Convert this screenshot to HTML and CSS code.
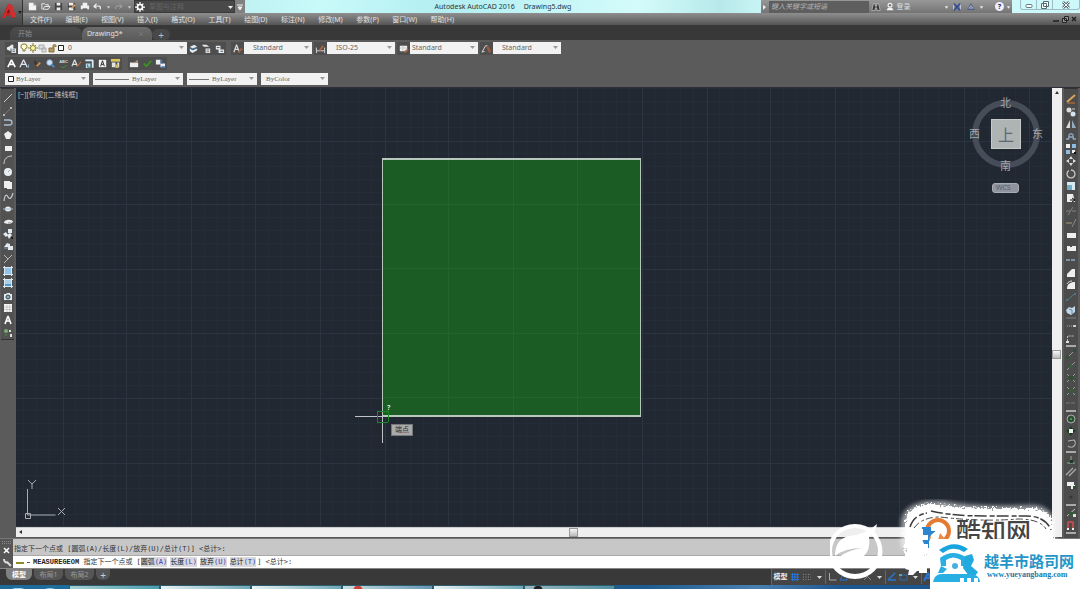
FILE: index.html
```html
<!DOCTYPE html>
<html lang="zh-CN">
<head>
<meta charset="utf-8">
<title>Autodesk AutoCAD 2016 - Drawing5.dwg</title>
<link rel="stylesheet" href="styles.css">
</head>
<body>
<header class="app-header">
  <button class="app-menu" aria-label="应用程序菜单">
    <svg width="22" height="24" viewBox="0 0 22 24"><path d="M2 17 8 3l4 1 4 12-4 1-1-3-5 1-1 2z" fill="#c51f22"/><path d="m7 12 2-5 2 4z" fill="#6b1113"/><path d="m8 3-2 8-4 6 3-1 3-8 4 8 4 0L12 4z" fill="#e0383a" opacity=".6"/><path d="M18 10h4l-2 3z" fill="#222"/></svg>
  </button>
  <div class="header-rows">
    <div class="titlebar">
      <nav class="quick-access" aria-label="快速访问工具栏">
        <button aria-label="新建"><svg viewBox="0 0 12 12"><path d="M2 2h5l3 3v5H2z" fill="#f3f3f3"/><path d="M7 2v3h3" fill="#999"/></svg></button>
        <button aria-label="打开"><svg viewBox="0 0 12 12"><path d="M2 9V3h3l1 1h3v2H5L3 9h6l2-3H6" fill="none" stroke="#eee"/></svg></button>
        <button aria-label="保存"><svg viewBox="0 0 12 12"><path d="M2 2h8v8H2z" fill="#444"/><path d="M4 2h4v3H4zM4 7h4v3H4z" fill="#eee"/></svg></button>
        <button aria-label="另存为"><svg viewBox="0 0 12 12"><path d="M2 2h8v8H2z" fill="#444"/><path d="M3 2h5v3H3zM3 7h5v3H3z" fill="#eee"/><path d="m6 8 4-4" stroke="#d19a57" stroke-width="2"/></svg></button>
        <button aria-label="打印"><svg viewBox="0 0 12 12"><path d="M4 2h5v3H4zM2 5h9v4H2z" fill="#f0f0f0"/><path d="M4 8h5v2H4z" fill="#666"/></svg></button>
        <button aria-label="放弃"><svg viewBox="0 0 12 12"><path d="M9 9c1-4-2-4-6-3m2-3L2 6l3 2" fill="none" stroke="#eee" stroke-width="1.3"/></svg></button>
        <button class="narrow" aria-label="放弃列表"><svg viewBox="0 0 6 12"><path d="M1 5h4L3 8z" fill="#ccc"/></svg></button>
        <button aria-label="重做"><svg viewBox="0 0 12 12"><path d="M3 9c-1-4 2-4 6-3M7 3l3 3-3 2" fill="none" stroke="#aaa"/></svg></button>
        <button class="narrow" aria-label="重做列表"><svg viewBox="0 0 6 12"><path d="M1 5h4L3 8z" fill="#ccc"/></svg></button>
      </nav>
      <div class="workspace">
        <svg width="12" height="12" viewBox="0 0 12 12"><circle cx="6" cy="6" r="3" fill="none" stroke="#fff" stroke-width="2"/><path d="M6 0v3M6 9v3M0 6h3M9 6h3M2 2l2 2M10 2 8 4M2 10l2-2M10 10 8 8" stroke="#fff" stroke-width="1.500"/></svg>
        <select aria-label="工作空间"><option>草图与注释</option></select>
        <svg width="6" height="12"><path d="M0 5h5L2.500 8z" fill="#eee"/></svg>
      </div>
      <button class="qat-more" aria-label="自定义"><svg width="8" height="12"><path d="M1 4h6M2 6h4L4 9z" fill="#eee" stroke="#eee"/></svg></button>
      <h1 class="title"><span>Autodesk AutoCAD 2016</span><span>Drawing5.dwg</span></h1>
      <div class="infocenter">
        <span class="info-arrow"><svg width="7" height="12"><path d="m2 4 3 2-3 3z" fill="#eee"/></svg></span>
        <input aria-label="搜索" placeholder="键入关键字或短语">
        <button aria-label="查找"><svg viewBox="0 0 12 12"><path d="M3 2h2v3h2V2h2l2 8H7V7H5v3H1z" fill="#333" stroke="#ddd" stroke-width=".7"/></svg></button>
        <button class="signin"><svg viewBox="0 0 12 12"><circle cx="6" cy="4" r="3" fill="#f4f4f4"/><path d="M2 10c0-4 8-4 8 0z" fill="#f4f4f4"/><circle cx="6" cy="4" r="1.500" fill="#777"/></svg>登录</button>
        <span class="spacer"></span>
        <button class="narrow" aria-label="登录选项"><svg viewBox="0 0 6 12"><path d="M1 5h4L3 8z" fill="#eee"/></svg></button>
        <button aria-label="Exchange"><svg viewBox="0 0 12 12"><path d="m2 2 8 8M10 2l-8 8" stroke="#304b91" stroke-width="2"/><path d="M2 3v6M10 3v6" stroke="#d7dcec"/></svg></button>
        <button aria-label="A360"><svg viewBox="0 0 12 12"><path d="m6 2 4 7H2z" fill="#c9cede" stroke="#445481"/><path d="M6 4v3L3 9m3-2 3 2" fill="none" stroke="#445481"/></svg></button>
        <button class="narrow" aria-label="A360选项"><svg viewBox="0 0 6 12"><path d="M1 5h4L3 8z" fill="#eee"/></svg></button>
        <button class="help" aria-label="帮助">?</button>
        <button class="narrow" aria-label="帮助选项"><svg viewBox="0 0 6 12"><path d="M1 5h4L3 8z" fill="#eee"/></svg></button>
      </div>
      <div class="window-controls">
        <button aria-label="最小化"><svg width="10" height="8"><rect x="2" y="3.500" width="6" height="3" rx="1" fill="#fff" stroke="#667a85"/></svg></button>
        <button aria-label="还原"><svg width="10" height="8"><path d="M3.500.5h5v5h-5zM1.500 2.500h5v5h-5z" fill="#fff" stroke="#566975"/></svg></button>
        <button class="close" aria-label="关闭"><svg width="10" height="8"><path d="m2 1 6 6M8 1 2 7" stroke="#566975" stroke-width="2.600"/><path d="m2 1 6 6M8 1 2 7" stroke="#fff"/></svg></button>
      </div>
    </div>
    <div class="menubar">
      <nav class="menus" aria-label="菜单">
        <button>文件(F)</button><button>编辑(E)</button><button>视图(V)</button><button>插入(I)</button><button>格式(O)</button><button>工具(T)</button><button>绘图(D)</button><button>标注(N)</button><button>修改(M)</button><button>参数(P)</button><button>窗口(W)</button><button>帮助(H)</button>
      </nav>
      <div class="doc-controls">
        <button aria-label="最小化文档"><svg width="8" height="8"><path d="M1 6h6" stroke="#222" stroke-width="1.500"/></svg></button>
        <button aria-label="还原文档"><svg width="8" height="8"><path d="M3.500 1.500h4v4h-4zM1.500 3.500h4v4h-4z" fill="#999" stroke="#222"/></svg></button>
        <button aria-label="关闭文档"><svg width="8" height="8"><path d="m2 2 4 4M6 2 2 6" stroke="#222" stroke-width="1.500"/></svg></button>
      </div>
    </div>
  </div>
</header>

<nav class="file-tabs" aria-label="文件">
  <button class="file-tab">开始</button>
  <button class="file-tab active">Drawing5*<svg width="6" height="6"><path d="m1 1 4 4M5 1 1 5" stroke="#777"/></svg></button>
  <button class="add-tab" aria-label="新图形">+</button>
</nav>

<section class="toolbars" aria-label="工具栏">
  <div class="bar">
    <button class="tool" aria-label="图层特性"><svg viewBox="0 0 12 12"><path d="m1 5 4-2v6L1 7zM5 2h3v4H5zM6 6h5v5H6z" fill="#e8edf0"/><path d="M7 7.500h3M7 9.500h3" stroke="#567"/></svg></button>
    <div class="combo layer">
      <svg width="50" height="12" viewBox="0 0 50 12"><path d="M6 2a2.500 2.500 0 0 1 1 5v2H5V7a2.500 2.500 0 0 1 1-5z" fill="#fffbd0" stroke="#857c3a"/><circle cx="15" cy="6" r="2.500" fill="#fff6a0" stroke="#8b8137"/><path d="M15 1v2M15 9v2M10 6h2M18 6h2M12 3l1 1M18 3l-1 1M12 9l1-1M18 9l-1-1" stroke="#8b8137"/><path d="M21 3h5v4h-5zM24 6h4v4h-4z" fill="#ddd" stroke="#aaa"/><path d="M31 6h5v4h-5zM35 6V4c0-2 3-2 3 0v1" fill="#b29862" stroke="#8c7038"/><path d="M40.500 3.500h5v5h-5z" fill="#fff" stroke="#222"/></svg>
      <select class="digit" aria-label="图层"><option>0</option></select>
      <svg class="arrow" width="5" height="4"><path d="M0 0h5L2.500 3z"/></svg>
    </div>
    <div class="tool-set">
      <button class="tool" aria-label="置为当前"><svg viewBox="0 0 12 12"><path d="m2 4 5-2 3 2-5 2zM2 6l3 2 5-2v2l-5 3-3-2z" fill="#e3eaf0"/><path d="m1 5 4 2 5-2" stroke="#3b76a8" fill="none"/></svg></button>
      <button class="tool" aria-label="上一个图层"><svg viewBox="0 0 12 12"><path d="m1 2 5 0 3 2H3zM5 6h5v5H5z" fill="#e8e8e8"/><path d="M6 7.500h3M6 9.500h3" stroke="#777"/></svg></button>
      <button class="tool" aria-label="图层状态"><svg viewBox="0 0 12 12"><path d="M2 3h5v4H2zM5 7h6v4H5z" fill="#eee"/><path d="M3 5h3M7 9h3" stroke="#357"/></svg></button>
    </div>
    <button class="tool" aria-label="文字样式"><svg viewBox="0 0 12 12"><path d="m2 10 3-8 3 8M3 7h4" fill="none" stroke="#ddd" stroke-width="1.300"/><path d="m7 10 4-4" stroke="#a45c3d" stroke-width="2"/></svg></button>
    <div class="combo style inset"><select aria-label="文字样式"><option>Standard</option></select><svg class="arrow" width="5" height="4"><path d="M0 0h5L2.500 3z"/></svg></div>
    <button class="tool" aria-label="标注样式"><svg viewBox="0 0 12 12"><path d="M1.500 5v6M10.500 5v6M2 8.500h8" stroke="#ddd"/><path d="m5 8 4-5" stroke="#a96544" stroke-width="2"/></svg></button>
    <div class="combo style inset"><select aria-label="标注样式"><option>ISO-25</option></select><svg class="arrow" width="5" height="4"><path d="M0 0h5L2.500 3z"/></svg></div>
    <button class="tool" aria-label="表格样式"><svg viewBox="0 0 12 12"><path d="M2 3h8v6H2z" fill="#eee"/><path d="M2 5.500h8M5.500 3v6" stroke="#ccc"/><path d="m7 10 4-3" stroke="#a96544" stroke-width="2"/></svg></button>
    <div class="combo style"><select aria-label="表格样式"><option>Standard</option></select><svg class="arrow" width="5" height="4"><path d="M0 0h5L2.500 3z"/></svg></div>
    <button class="tool" aria-label="多重引线样式"><svg viewBox="0 0 12 12"><path d="m1 10 4-7h2M1 10l3-1" stroke="#ddd" fill="none"/><path d="m7 4 3 6" stroke="#9a5a3d" stroke-width="3"/></svg></button>
    <div class="combo style inset"><select aria-label="多重引线样式"><option>Standard</option></select><svg class="arrow" width="5" height="4"><path d="M0 0h5L2.500 3z"/></svg></div>
  </div>
  <div class="bar text-tools">
    <button class="tool" aria-label="多行文字"><svg viewBox="0 0 12 12"><path d="m2 10 4-8 4 8M4 7h4" fill="none" stroke="#fff" stroke-width="1.800"/></svg></button>
    <button class="tool" aria-label="单行文字"><svg viewBox="0 0 12 12"><path d="m1 10 4-8 4 8M3 7h4" fill="none" stroke="#dfe6ee" stroke-width="1.400"/><path d="M10.500 7v4" stroke="#7db0dd"/></svg></button>
    <button class="tool" aria-label="编辑文字"><svg viewBox="0 0 12 12"><path d="m3 3 3 7" stroke="#333" stroke-width="2"/><path d="m5 9 4-4" stroke="#c78c4f" stroke-width="2"/></svg></button>
    <button class="tool" aria-label="查找文字"><svg viewBox="0 0 12 12"><circle cx="5" cy="5" r="3" fill="#cfe2f5" stroke="#8fb4d8"/><path d="m7 7 3 3" stroke="#4f8fcf" stroke-width="2"/></svg></button>
    <button class="tool abc" aria-label="拼写检查">ABC<svg viewBox="0 0 10 5"><path d="m2 2 2 2 4-3" fill="none" stroke="#3f8d3a"/></svg></button>
    <button class="tool" aria-label="文字样式管理"><svg viewBox="0 0 12 12"><path d="m1 9 3-7 3 7M2 7h4" fill="none" stroke="#ddd" stroke-width="1.300"/><path d="m7 9 4-5" stroke="#b06340" stroke-width="1.500"/></svg></button>
    <button class="tool" aria-label="缩放文字"><svg viewBox="0 0 12 12"><path d="M1.500 2.500h8v8" fill="none" stroke="#d6ebf5" stroke-width="2"/><path d="M2 6h5v5H2z" fill="#b8dff0"/><path d="M4 7v3h3" stroke="#367" fill="none"/></svg></button>
    <button class="tool" aria-label="对正文字"><svg viewBox="0 0 12 12"><path d="M2 2h8v8H2z" fill="#f1f1f1"/><path d="m4 9 2-6 2 6M5 7h2" fill="none" stroke="#222"/></svg></button>
    <button class="tool" aria-label="空间转换"><svg viewBox="0 0 12 12"><path d="M1 1h10v3H1z" fill="#d8c45a"/><path d="M2 5h4v5H2zM8 5h2v5H8z" fill="#e3e3e3"/><path d="M6 7h3v4H6z" fill="#cdb850"/></svg></button>
    <button class="tool split" aria-label="附着"><svg viewBox="0 0 12 12"><path d="M1 5h9v5H1z" fill="#eee"/><path d="m5 6 4-4 1 2" fill="#b99278"/></svg></button>
    <button class="tool" aria-label="确认"><svg viewBox="0 0 12 12"><path d="m2 6 3 3 5-6" fill="none" stroke="#38931e" stroke-width="2"/></svg></button>
    <button class="tool" aria-label="选择"><svg viewBox="0 0 12 12"><path d="M1 2h5v5H1zM6 6h5v4H6z" fill="#e8edf4"/><path d="M7 2v4M7 10h4" stroke="#4578b0" stroke-width="2"/></svg></button>
  </div>
  <div class="bar props">
    <div class="combo color"><svg width="10" height="10"><path d="M2.500 2.500h5v5h-5z" fill="#fff" stroke="#222"/></svg><select aria-label="颜色"><option>ByLayer</option></select><svg class="arrow" width="5" height="4"><path d="M0 0h5L2.500 3z"/></svg></div>
    <div class="combo linetype"><svg width="36" height="4"><path d="M2 2.500h34" stroke="#777"/></svg><select aria-label="线型"><option>ByLayer</option></select><svg class="arrow" width="5" height="4"><path d="M0 0h5L2.500 3z"/></svg></div>
    <div class="combo weight"><svg width="22" height="4"><path d="M2 2.500h20" stroke="#777"/></svg><select aria-label="线宽"><option>ByLayer</option></select><svg class="arrow" width="5" height="4"><path d="M0 0h5L2.500 3z"/></svg></div>
    <div class="combo plot"><select aria-label="打印样式"><option>ByColor</option></select><svg class="arrow" width="5" height="4"><path d="M0 0h5L2.500 3z"/></svg></div>
  </div>
</section>

<main class="workarea">
  <aside class="draw-tools" aria-label="绘图">
    <button aria-label="直线"><svg viewBox="0 0 12 12"><path d="m2 10 8-8" stroke="#ccc"/></svg></button>
    <button aria-label="构造线"><svg viewBox="0 0 12 12"><path d="m3 9 6-6" stroke="#777"/><path d="M1 9h2v2H1zM8 2h2v2H8z" fill="#aeb9c6"/></svg></button>
    <button aria-label="多段线"><svg viewBox="0 0 12 12"><path d="M2 3h5c4 0 4 5 0 5H2" fill="none" stroke="#a9bfd2" stroke-width="1.300"/></svg></button>
    <button aria-label="多边形"><svg viewBox="0 0 12 12"><path d="m6 2 4 3-2 5H4L2 5z" fill="#f0f0f0"/></svg></button>
    <button aria-label="矩形"><svg viewBox="0 0 12 12"><path d="M3 4h7v5H3z" fill="#eee"/></svg></button>
    <button aria-label="圆弧"><svg viewBox="0 0 12 12"><path d="M2 10c0-5 3-8 8-8" fill="none" stroke="#c5d0da"/></svg></button>
    <button aria-label="圆"><svg viewBox="0 0 12 12"><circle cx="6" cy="6" r="4" fill="#e8eef2"/><path d="m6 6 2-2" stroke="#9ab"/></svg></button>
    <button aria-label="修订云线"><svg viewBox="0 0 12 12"><path d="M2 2h6v1h2v7H5V9H2z" fill="#eee"/></svg></button>
    <button aria-label="样条曲线"><svg viewBox="0 0 12 12"><path d="M2 10C3 2 5 4 6 6s3 3 5-4" fill="none" stroke="#c5cad0" stroke-width="1.200"/></svg></button>
    <button aria-label="椭圆"><svg viewBox="0 0 12 12"><ellipse cx="6" cy="6" rx="3" ry="2.500" fill="#eee"/><path d="M1 6h10" stroke="#a3bdd4"/></svg></button>
    <button aria-label="椭圆弧"><svg viewBox="0 0 12 12"><path d="M2 7c0-4 9-4 9-1L8 8H6z" fill="#eee"/><path d="M6 7h3" stroke="#789"/></svg></button>
    <button aria-label="插入块"><svg viewBox="0 0 12 12"><path d="m1 6 3-2 2 3-2 2zM6 1h4v4H6zM5 7l3-2 2 2-3 4z" fill="#e2eaf1"/><path d="M9 9h2v2H9z" fill="#222"/></svg></button>
    <button aria-label="创建块"><svg viewBox="0 0 12 12"><path d="m2 7 3-4 3 1v3zM6 6h5v4H6z" fill="#e2e8ee"/><path d="M2 8h4" stroke="#89a"/></svg></button>
    <button aria-label="点"><svg viewBox="0 0 12 12"><path d="m2 2 4 4 4-4M6 6l-4 4" fill="none" stroke="#bbb"/></svg></button>
    <button aria-label="图案填充"><svg viewBox="0 0 12 12"><path d="M2.500 1v10M9.500 1v10M1 2.500h10M1 9.500h10" stroke="#dce7ef"/><path d="M3 3h6v6H3z" fill="#8fc4e8"/></svg></button>
    <button aria-label="渐变色"><svg viewBox="0 0 12 12"><path d="M2.500 1v10M9.500 1v10M1 2.500h10M1 9.500h10" stroke="#dce7ef"/><path d="M3 3h6v6H3z" fill="#aacfe6"/><path d="M3 7h6v2H3z" fill="#5398ce"/></svg></button>
    <button aria-label="面域"><svg viewBox="0 0 12 12"><path d="M2 4h2l1-1h3v1h2v6H2z" fill="#e5edf1"/><circle cx="6" cy="7" r="2" fill="#89afc3" stroke="#344"/></svg></button>
    <button aria-label="表格"><svg viewBox="0 0 12 12"><path d="M2 2h8v8H2z" fill="#f4f4f4"/><path d="M2 5h8M2 7.500h8M5 3v7M7.500 3v7" stroke="#aaa" stroke-width=".5"/></svg></button>
    <button aria-label="文字"><svg viewBox="0 0 12 12"><path d="m3 10 3-8 3 8M4 7h4" fill="none" stroke="#fff" stroke-width="1.600"/></svg></button>
    <button aria-label="添加选定对象"><svg viewBox="0 0 12 12"><circle cx="4" cy="4" r="2" fill="#7caa70"/><path d="M7 3h2v2H7zM8 7h2v3H8z" fill="#ddd"/><path d="M3 7h2v2H3z" fill="#47793c"/></svg></button>
  </aside>

  <div class="drawing">
    <div class="canvas">
      <svg class="model" width="100%" height="100%" shape-rendering="crispEdges">
        <defs>
          <pattern id="minor" x="46" y="52" width="322" height="322" patternUnits="userSpaceOnUse">
            <path d="M13 0v322M26 0v322M39 0v322M52 0v322M77 0v322M90 0v322M103 0v322M116 0v322M142 0v322M155 0v322M167 0v322M180 0v322M206 0v322M219 0v322M232 0v322M245 0v322M270 0v322M283 0v322M296 0v322M309 0v322M0 13h322M0 26h322M0 39h322M0 52h322M0 77h322M0 90h322M0 103h322M0 116h322M0 142h322M0 155h322M0 167h322M0 180h322M0 206h322M0 219h322M0 232h322M0 245h322M0 270h322M0 283h322M0 296h322M0 309h322" stroke="#242c37"/>
            <path d="M1 0v322M64 0v322M129 0v322M193 0v322M258 0v322M0 1h322M0 64h322M0 129h322M0 193h322M0 258h322" stroke="#2b3541"/>
          </pattern>
        </defs>
        <rect width="100%" height="100%" fill="#212832"/>
        <rect width="100%" height="100%" fill="url(#minor)"/>
        <rect x="367" y="71" width="258" height="257" fill="#1a5c24"/>
        <path d="M432 71v257M497 71v257M561 71v257M367 116h258M367 180h258M367 245h258M367 309h258" stroke="#22642e"/>
        <path d="M366.500 70.500h258v257h-258z" fill="none" stroke="#b5c6b8" stroke-width="1"/>
        <path d="M366 71h259M366 328h259" stroke="#b9c8bc" stroke-width="2"/>
        <path d="M339 328.500h27M366.500 328v27" stroke="#bfc3c7"/>
        <path d="M361 323h11v11h-11z" fill="none" stroke="#188a25" stroke-width="1"/>
      </svg>
      <span class="view-label">[−][俯视][二维线框]</span>
      <span class="query-mark">?</span>
      <span class="snap-tip">端点</span>
      <div class="viewcube">
        <svg width="76" height="76"><circle cx="38" cy="38" r="31" fill="none" stroke="#474d58" stroke-width="6"/></svg>
        <span class="north">北</span><span class="south">南</span><span class="west">西</span><span class="east">东</span>
        <button class="cube-top">上</button>
      </div>
      <button class="wcs">WCS</button>
      <svg class="ucs" width="46" height="46"><path d="M4.500 15v26h28M2.500 39.500h5v5h-5zM5 6l4 4 4-4M9 10v5M35 34l7 7M42 34l-7 7" fill="none" stroke="#a9adb3"/></svg>
    </div>
    <div class="vscroll"><svg width="10" height="10"><path d="m3 6 2-3 2 3z" fill="#333"/></svg><span class="thumb"></span></div>
    <div class="hscroll"><svg width="10" height="9"><path d="m6 2-3 2 3 2z" fill="#333"/></svg><span class="thumb"></span></div>
  </div>

  <aside class="modify-tools" aria-label="修改">
    <div class="group g18">
      <button aria-label="删除"><svg viewBox="0 0 12 12"><path d="m2 9 8-7" stroke="#d9a45c" stroke-width="2"/><path d="M2 10h8" stroke="#c97732"/></svg></button>
      <button aria-label="复制"><svg viewBox="0 0 12 12"><circle cx="4" cy="4" r="2.500" fill="#ddd"/><circle cx="8" cy="8" r="2.500" fill="#d6e4ef"/><path d="M7 3h3" stroke="#ccc"/></svg></button>
      <button aria-label="镜像"><svg viewBox="0 0 12 12"><path d="M5 2v8H1z" fill="#d7dce1"/><path d="M7 2v8h4z" fill="#94abc0"/></svg></button>
      <button aria-label="偏移"><svg viewBox="0 0 12 12"><path d="M1 9h3c-2-7 6-7 4 0h3M4 7h4" fill="none" stroke="#8fa5bc" stroke-width="1.300"/></svg></button>
      <button aria-label="阵列"><svg viewBox="0 0 12 12"><path d="M1 1h4v4H1z" fill="#eee"/><path d="M7 1h4v4H7zM1 7h4v4H1z" fill="#8cbbe6"/><path d="M7 7h3v3H7z" fill="#eee"/><path d="M9 9h2v2H9z" fill="#111"/></svg></button>
      <button aria-label="移动"><svg viewBox="0 0 12 12"><path d="m6 1 2 3H4zM6 11l2-3H4zM1 6l3-2v4zM11 6 8 4v4z" fill="#dbe1e7"/></svg></button>
      <button aria-label="旋转"><svg viewBox="0 0 12 12"><path d="M4 2.500a4 4 0 1 0 4 0L6 2" fill="none" stroke="#c8c8c8" stroke-width="1.300"/></svg></button>
      <button aria-label="缩放"><svg viewBox="0 0 12 12"><path d="M2 2h8v8H2z" fill="#d6e9f1"/><path d="M2 5h5v5H2z" fill="#76adc5"/></svg></button>
      <button aria-label="拉伸"><svg viewBox="0 0 12 12"><path d="M2 2h6l2 8H2z" fill="#eee"/><path d="M5 8h5M7 6l3 2-3 2" stroke="#111" fill="none"/></svg></button>
      <button aria-label="修剪"><svg viewBox="0 0 12 12"><path d="M1 6h4M7 6h4M3 10l5-8" stroke="#7d8589"/></svg></button>
      <button aria-label="延伸"><svg viewBox="0 0 12 12"><path d="M1 6h6" stroke="#a49a72"/><path d="m7 10 4-8" stroke="#889"/></svg></button>
      <button aria-label="打断于点"><svg viewBox="0 0 12 12"><path d="M2 4h9v5H2z" fill="#eee"/></svg></button>
      <button aria-label="打断"><svg viewBox="0 0 12 12"><path d="M2 4h3v1h2V4h4v5H2z" fill="#eee"/></svg></button>
      <button aria-label="合并"><svg viewBox="0 0 12 12"><path d="M1 6h10" stroke="#8290a3" stroke-width="2" stroke-dasharray="4 1"/></svg></button>
      <button aria-label="倒角"><svg viewBox="0 0 12 12"><path d="M2 10V7l5-5h3v8z" fill="#eee"/></svg></button>
      <button aria-label="圆角"><svg viewBox="0 0 12 12"><path d="M2 10c0-5 3-7 8-7v7z" fill="#eee"/><path d="M2 5c1-2 3-3 5-3" fill="none" stroke="#ddd"/></svg></button>
      <button aria-label="光顺曲线"><svg viewBox="0 0 12 12"><path d="M2 9c4-1 4-5 8-6" fill="none" stroke="#557e88"/><path d="M1 8h2v2H1zM9 2h2v2H9z" fill="#4b7784"/></svg></button>
      <button aria-label="分解"><svg viewBox="0 0 12 12"><path d="m1 6 3-3 3 1 3-2v6l-4 3-4-2z" fill="#bfd6e8"/><path d="m4 5 3 1v4" stroke="#6389a8" fill="none"/></svg></button>
    </div>
    <hr>
    <div class="group g2">
      <button aria-label="临时追踪点"><svg viewBox="0 0 12 12"><path d="M2 6h7" stroke="#aaa" stroke-dasharray="1 1"/><path d="M8 5h3v2H8z" fill="#ccc"/></svg></button>
      <button aria-label="捕捉自"><svg viewBox="0 0 12 12"><path d="M2.500 9V4h7" fill="none" stroke="#bbb" stroke-dasharray="2 1"/><path d="M1 9h3v2H1z" fill="#ddd"/></svg></button>
    </div>
    <hr>
    <div class="group g5">
      <button aria-label="捕捉到端点"><svg viewBox="0 0 12 12"><path d="m2 10 8-8" stroke="#999"/><path d="M1 8h3v3H1zM8 1h3v3H8z" fill="#2f5036"/></svg></button>
      <button aria-label="捕捉到中点"><svg viewBox="0 0 12 12"><path d="m2 10 8-8" stroke="#999"/><path d="m6 4 2 4H4z" fill="#2f6237"/></svg></button>
      <button aria-label="捕捉到交点"><svg viewBox="0 0 12 12"><path d="m2 2 8 8M10 2l-8 8" stroke="#94a499"/><path d="m4 4 4 4M8 4 4 8" stroke="#27512d" stroke-width="1.500"/></svg></button>
      <button aria-label="外观交点"><svg viewBox="0 0 12 12"><path d="m2 2 8 8M10 2l-8 8" stroke="#949c97"/><path d="M4 4h4v4H4z" fill="#345e38"/></svg></button>
      <button aria-label="捕捉到延长线"><svg viewBox="0 0 12 12"><path d="M1 6h10" stroke="#777" stroke-dasharray="4 1"/></svg></button>
    </div>
    <hr>
    <div class="group g3">
      <button aria-label="捕捉到圆心"><svg viewBox="0 0 12 12"><circle cx="6" cy="6" r="4" fill="none" stroke="#9baf9e"/><circle cx="6" cy="6" r="2" fill="#3c9949" stroke="#173d1e"/></svg></button>
      <button aria-label="捕捉到象限点"><svg viewBox="0 0 12 12"><path d="m6 1 2 3 3 2-3 2-2 3-2-3-3-2 3-2z" fill="#183e1e"/><path d="M4 4h4v4H4z" fill="#f1f1f1"/></svg></button>
      <button aria-label="捕捉到切点"><svg viewBox="0 0 12 12"><path d="M3 3 9 2a4 4 0 1 1-6 6" fill="none" stroke="#aaa" stroke-width="1.200"/></svg></button>
    </div>
    <hr>
    <div class="group g4">
      <button aria-label="捕捉到垂足"><svg viewBox="0 0 12 12"><path d="M6 2v7M2 9h8" stroke="#9aa59c"/><path d="M5 6h3v3H5z" fill="#183d20"/></svg></button>
      <button aria-label="捕捉到平行线"><svg viewBox="0 0 12 12"><path d="m1 9 7-7M4 10l7-7" stroke="#a7aca8" stroke-width="1.300"/></svg></button>
      <button aria-label="捕捉到插入点"><svg viewBox="0 0 12 12"><path d="M2 3h7v4H2zM6 6h4v4H6z" fill="#eee"/><path d="M8 7h3v3H8z" fill="#27512d"/></svg></button>
      <button aria-label="捕捉到节点"><svg viewBox="0 0 12 12"><circle cx="6" cy="6" r="1.500" fill="#2c3c30"/></svg></button>
    </div>
    <hr>
    <div class="group g2">
      <button aria-label="捕捉到最近点"><svg viewBox="0 0 12 12"><path d="m2 9 8-7" stroke="#c0c6c1"/><path d="M4 5h4v3H4z" fill="#295f37"/><path d="M8 7h3v3H8z" fill="#ddd"/></svg></button>
      <button aria-label="对象捕捉设置"><svg viewBox="0 0 12 12"><path d="M3 10V3h5v7" fill="none" stroke="#b84d4d" stroke-width="2"/><path d="M2 9h2v2H2zM7 9h2v2H7z" fill="#eee"/></svg></button>
    </div>
    <hr>
  </aside>
</main>

<section class="command" aria-label="命令行">
  <div class="command-grip">
    <svg width="13" height="30"><path d="M2 2.500h9M2 4.500h9" stroke="#888" stroke-dasharray="1 1"/><path d="m4 9 5 5M9 9l-5 5" stroke="#fff" stroke-width="1.500"/><path d="M4 20c0 3 2 4 3 3l4 4" fill="none" stroke="#ddd" stroke-width="2"/></svg>
  </div>
  <div class="command-lines">
    <p class="history">指定下一个点或 [圆弧(A)/长度(L)/放弃(U)/总计(T)] &lt;总计&gt;:</p>
    <div class="prompt">
      <svg width="18" height="8"><path d="M2 5h8" stroke="#8e8b25" stroke-width="2"/><path d="M13 4.500h3" stroke="#555"/></svg>
      <label for="cmd"><b>MEASUREGEOM</b> 指定下一个点或</label>
      <span class="options">[<button>圆弧<i>(A)</i></button><button>长度<i>(L)</i></button><button>放弃<i>(U)</i></button><button>总计<i>(T)</i></button>]</span>
      <span>&lt;总计&gt;:</span>
      <input id="cmd">
    </div>
  </div>
</section>

<footer class="statusbar">
  <nav class="layouts" aria-label="布局">
    <button class="active">模型</button><button>布局1</button><button>布局2</button><button class="plus" aria-label="新建布局">+</button>
  </nav>
  <div class="status-tools">
    <button class="model-btn">模型</button>
    <button aria-label="栅格"><svg viewBox="0 0 12 12"><path d="M2 3.500h8M2 6h8M2 8.500h8M3.500 2v8M6 2v8M8.500 2v8" stroke="#2774d4"/></svg></button>
    <button aria-label="捕捉"><svg viewBox="0 0 12 12"><path d="M2 3.500h8M2 6h8M2 8.500h8" stroke="#888" stroke-dasharray="1 1.500"/></svg></button>
    <button aria-label="捕捉选项"><svg viewBox="0 0 12 12"><path d="M4 5h5L6.500 8z" fill="#ddd"/></svg></button>
    <button class="split" aria-label="正交"><svg viewBox="0 0 12 12"><path d="M3.500 2v7h7" fill="none" stroke="#aaa"/></svg></button>
    <button aria-label="极轴"><svg viewBox="0 0 12 12"><path d="M3 9h7a4 4 0 0 0-4-5z" fill="none" stroke="#2774d4"/></svg></button>
    <button aria-label="极轴选项"><svg viewBox="0 0 12 12"><path d="M4 5h5L6.500 8z" fill="#ddd"/></svg></button>
    <button aria-label="等轴测"><svg viewBox="0 0 12 12"><path d="m3 2 7 7M3 9l3-3" stroke="#888"/></svg></button>
    <button aria-label="等轴测选项"><svg viewBox="0 0 12 12"><path d="M4 5h5L6.500 8z" fill="#ddd"/></svg></button>
    <button class="split" aria-label="追踪"><svg viewBox="0 0 12 12"><path d="m2 9 7-7M2 9h8" stroke="#2774d4" stroke-width="1.500"/></svg></button>
    <button aria-label="对象捕捉"><svg viewBox="0 0 12 12"><path d="M3 4h7v5H3z" fill="none" stroke="#3568a8"/><path d="M2 3h3v2H2z" fill="#5a9"/></svg></button>
    <button aria-label="对象捕捉选项"><svg viewBox="0 0 12 12"><path d="M4 5h5L6.500 8z" fill="#ddd"/></svg></button>
    <button class="split" aria-label="注释"><svg viewBox="0 0 12 12"><path d="m2 10 4-8 4 8M3 7h6" fill="none" stroke="#2774d4" stroke-width="2"/></svg></button>
  </div>
</footer>

<div class="taskbar">
  <span class="start"></span><span class="task"></span><span class="task light"></span><span class="task light"></span><span class="task red"></span><span class="task light"></span><span class="task dark"></span>
</div>

<div class="watermarks">
  <svg class="marks" width="250" height="90" viewBox="830 499 250 90">
    <defs>
      <filter id="rough" x="-10%" y="-30%" width="120%" height="160%"><feTurbulence type="fractalNoise" baseFrequency=".5" numOctaves="2" seed="4"/><feDisplacementMap in="SourceGraphic" scale="10" xChannelSelector="R" yChannelSelector="G"/></filter>
      <filter id="haze"><feGaussianBlur stdDeviation="2"/></filter>
    </defs>
    <path d="M901 548v-26q2-19 30-21h12q30 6 92 4 18 2 20 20v22z" fill="#fff" opacity=".55" filter="url(#haze)"/>
    <path d="M905 558v-36q2-18 28-18 30 5 98 4 22 2 22 20v18H930v10z" fill="#fff" filter="url(#rough)"/>
    <path d="M910 527q4-12 17-14M931 511q20 5 54 5h38q22-1 28 14" fill="none" stroke="#3d3d3f" stroke-width="1.500" stroke-dasharray="12 3 5 2"/>
    <path d="M914 528q8-11 26-11 42 5 78 2 22 0 28 10" fill="none" stroke="#48484a" stroke-dasharray="7 3 3 2"/>
    <circle cx="938" cy="531" r="11" fill="none" stroke="#e57a32" stroke-width="4"/>
    <path d="M922 527h9v4h5l-7 6v12q-9-5-7-22z" fill="#2c86cf"/>
    <path d="m931 535 9-7 4 5-7 6 16 4-4 6h-20z" fill="#fff"/>
    <path d="M940 533l6 7h-8z" fill="#ec8a4a"/>
    <g fill="#fff">
      <path d="M908 528h4v7h6v-6h5v6h5v5h-6v4h6v5h-4v11h4v5h-5l-2 6h-4l-4 4h-5l1-5-4-1 5-7v-14h-5v-5h4z"/>
      <path d="M922 548h8v4h-8zM920 558h8v5h-8zM919 568h8v5h-8z"/>
      <path fill-rule="evenodd" d="M855 524a27 27 0 1 0 0 55 27 27 0 0 0 0-55m0 4a23 23 0 1 1 0 46 23 23 0 0 1 0-46"/>
      <path d="M877 524q-1 9-8 13 2 13-6 20-8 7-19 4l-5 7q-4-3-3-7 5-9 26-13-17 0-27 8 0-17 14-20 18-2 28-12z"/>
    </g>
  </svg>
  <span class="kuzhi">酷知网</span>
  <div class="site-badge">
    <svg width="52" height="46" viewBox="0 0 52 46"><path d="M8 8q15-11 29-1l-4 3Q22 3 12 11z" fill="#18a5df"/><path d="M9 16q13-10 27 0v8H10z" fill="#27afe3"/><path d="M15 18q7-5 15 0v8H15z" fill="#fff"/><circle cx="24" cy="24" r="3" fill="#48aee2"/><path d="m34 14 7-2 2 6-3 6 7 6-3 4h-6l-6-8z" fill="#22a9dd"/><path d="m10 24 6 3-4 4H7z" fill="#27afe3"/><path d="M3 37q2-5 8-5h28q9 0 10 8H2z" fill="#27afe3"/><path d="M29 36h4v4h-4zM36 36h4v4h-4zM43 36h4v4h-4z" fill="#fff"/></svg>
    <div class="site-text"><strong>越羊市路司网</strong><a href="#site">www.yueyangbang.com</a></div>
  </div>
</div>
</body>
</html>
```
FILE: styles.css
```css
* { box-sizing: border-box; }
body {
  margin: 0;
  min-height: 100vh;
  display: flex;
  flex-direction: column;
  position: relative;
  overflow: hidden;
  background: #5b5b5b;
  color: #ddd;
  font: 7px/10px "Noto Sans", "Noto Sans CJK SC", sans-serif;
}
button, select, input {
  margin: 0;
  padding: 0;
  border: 0;
  background: none;
  color: inherit;
  font: inherit;
  min-width: 0;
  appearance: none;
  outline: 0;
}
button { display: flex; align-items: center; justify-content: center; white-space: nowrap; }
svg { display: block; flex: none; stroke-linejoin: bevel; }
p, h1 { margin: 0; font: inherit; }

/* title bar and menus */
.app-header { display: flex; height: 25px; }
.app-menu { width: 23px; background: linear-gradient(#777, #454545); border-right: 1px solid #333; }
.header-rows { flex: 1; display: flex; flex-direction: column; }
.titlebar {
  display: flex;
  height: 13px;
  background: linear-gradient(90deg, #a5d8dd, #c9fafa 28%, #b2eef1 40%, #d4fbfb 58%, #b8e9ea 66%, #d2fafb 72%, #cdf8f9);
}
.quick-access { display: flex; align-items: center; width: 111px; padding-left: 3px; background: linear-gradient(#8a8a8a, #6a6a6a); }
.quick-access button { width: 13px; }
.quick-access svg { width: 11px; height: 11px; }
.quick-access .narrow { width: 8px; }
.quick-access .narrow svg, .infocenter .narrow svg { width: 5px; height: 10px; }
.workspace { display: flex; align-items: center; width: 101px; background: #494949; border: 1px solid #3a3a3a; }
.workspace svg:first-child { width: 10px; height: 10px; }
.workspace select { flex: 1; padding-left: 4px; color: #646464; }
.qat-more { width: 10px; background: #818181; }
.title { flex: 1; display: flex; justify-content: center; gap: 9px; align-items: center; color: #26363a; }
.infocenter { display: flex; align-items: center; width: 251px; background: linear-gradient(#989898, #747474); }
.infocenter button svg { width: 10px; height: 10px; }
.infocenter button { width: 14px; }
.infocenter .narrow { width: 7px; }
.info-arrow { width: 8px; }
.infocenter input { width: 100px; height: 12px; padding-left: 2px; background: #5e5e5e; }
.infocenter input::placeholder { color: #b5b5b5; opacity: 1; font-style: italic; }
.infocenter .signin { width: 29px; gap: 2px; }
.spacer { flex: 1; }
.infocenter .help { width: 9px; height: 9px; margin: 0 1px 0 10px; border-radius: 50%; background: #eef; color: #224; font-weight: bold; }
.window-controls { display: flex; width: 60px; height: 10px; margin: 0 0 0 8px; border: 1px solid #9cbdc5; border-top: 0; border-radius: 0 0 3px 3px; }
.window-controls button { width: 16px; border-right: 1px solid #9cbdc5; }
.window-controls .close { flex: 1; border: 0; }
.menubar { display: flex; justify-content: space-between; height: 12px; padding: 0 2px 0 7px; background: linear-gradient(#8f8f8f, #555); }
.menus { display: flex; justify-content: space-between; width: 424px; padding-top: 1px; color: #e2e2e2; }
.doc-controls { display: flex; gap: 1px; }

/* drawing tabs */
.file-tabs { display: flex; align-items: flex-end; height: 15px; padding-left: 10px; background: #383838; }
.file-tab { width: 72px; height: 13px; padding: 0 8px; justify-content: flex-start; color: #8f8f8f; background: linear-gradient(#4c4c4c, #434343); border-radius: 7px 7px 0 0; }
.file-tab.active { width: 70px; padding: 0 8px 0 5px; justify-content: space-between; color: #e4e4e4; background: linear-gradient(#6d6d6d, #5b5b5b); }
.add-tab { width: 18px; height: 11px; color: #bbb; font-size: 10px; background: #484848; border-radius: 6px; }

/* toolbars */
.toolbars { display: flex; flex-direction: column; gap: 1px; height: 48px; padding-top: 1px; background: #5b5b5b; border-bottom: 1px solid #2c2f36; }
.bar { display: flex; align-items: center; height: 14px; }
.bar:first-child { padding-left: 5px; }
.tool { width: 13px; height: 13px; background: #4e4e4e; }
.tool svg { width: 11px; height: 11px; }
.tool-set { display: flex; margin-right: 5px; }
.combo { display: flex; align-items: center; height: 12px; padding-right: 3px; background: #f2f2f2; color: #666; }
.combo select { flex: 1; height: 12px; }
.arrow { fill: #999; }
.combo.layer { width: 169px; }
.combo.style { width: 68px; padding-left: 2px; margin-right: 2px; }
.combo.inset { padding-left: 9px; }
.text-tools { padding-left: 5px; height: 15px; }
.text-tools .split { margin-left: 6px; }
.text-tools .abc { flex-direction: column; font: bold 4px/5px "Liberation Sans", sans-serif; }
.abc svg { width: 10px; height: 5px; }
.props { gap: 4px; padding-left: 5px; height: 14px; font: 7px/10px "Liberation Serif", serif; }
.combo.color { width: 84px; padding-left: 1px; }
.combo.linetype { width: 90px; }
.combo.linetype select, .combo.weight select { padding-left: 3px; }
.combo.weight { width: 70px; }
.combo.plot { width: 67px; padding-left: 5px; }

/* work area */
.workarea { flex: 1; display: flex; min-height: 0; }
.draw-tools { display: grid; grid-template-rows: repeat(20, 1fr); align-self: flex-start; width: 13px; height: 252px; margin: 0 2px 0 1px; padding-top: 3px; background: #525252; border-top: 1px solid #333; border-bottom: 1px solid #333; }
.draw-tools svg, .modify-tools svg { width: 12px; height: 12px; }
.drawing { flex: 1; display: grid; grid-template: 1fr 10px / 1fr 10px; border-bottom: 1px solid #555; min-width: 0; }
.canvas { position: relative; background: #212832; overflow: hidden; }
.model { position: absolute; inset: 0; }
.view-label { position: absolute; left: 2px; top: 2px; color: #c2c5c9; }
.query-mark { position: absolute; left: 371px; top: 315px; color: #d7f0d8; font-weight: bold; }
.snap-tip { position: absolute; left: 375px; top: 336px; width: 22px; height: 12px; padding-left: 3px; background: #aaa; border: 1px solid #777; color: #333; }
.viewcube { position: absolute; right: 8px; top: 8px; width: 76px; height: 76px; font-size: 11px; line-height: 12px; color: #a3a7ac; }
.viewcube span { position: absolute; }
.north { left: 32px; top: 1px; }
.south { left: 32px; bottom: 0; }
.west { left: 1px; top: 32px; }
.east { right: 1px; top: 32px; }
.cube-top { position: absolute; left: 23px; top: 23px; width: 30px; height: 30px; background: #aeb3b4; border: 1px solid #c5c9ca; color: #5b6a75; font: 16px/18px "Noto Sans CJK SC", sans-serif; }
.wcs { position: absolute; right: 33px; top: 95px; width: 27px; height: 10px; padding-left: 3px; justify-content: flex-start; border-radius: 3px; background: #8f949e; border: 1px solid #a7acb5; color: #59606c; }
.ucs { position: absolute; left: 7px; bottom: 7px; }
.vscroll { grid-row: 1 / 3; grid-column: 2; display: flex; flex-direction: column; background: #efefef; }
.vscroll .thumb { width: 9px; height: 9px; margin-top: 252px; }
.hscroll { grid-row: 2; grid-column: 1; display: flex; align-items: center; background: #efefef; border-top: 1px solid #ccc; }
.hscroll .thumb { width: 9px; height: 9px; margin-left: 543px; }
.thumb { background: linear-gradient(#f6f6f6, #bbb); border: 1px solid #999; }
.modify-tools { width: 14px; margin: 0 2px; padding-top: 4px; background: #4c4c4c; border-top: 1px solid #333; }
.modify-tools hr { margin: 1px 2px; height: 2px; border: 0; background: #aaa; }
.modify-tools .g18 + hr { background: #666; }
.modify-tools hr:last-child { margin-bottom: 0; }
.group { display: grid; grid-auto-rows: 1fr; }
.g18 { height: 223px; }
.g5 { height: 61px; }
.g4 { height: 49px; }
.g3 { height: 37px; }
.g2 { height: 24px; }

/* command line */
.command { display: flex; height: 30px; border-top: 1px solid #777; color: #333; font: 7px/10px "DejaVu Sans Mono", "Noto Sans CJK SC", monospace; }
.command-grip { width: 13px; background: #565656; }
.command-lines { flex: 1; background: #fff; }
.history { height: 17px; padding: 5px 1px 0; background: #c7c7c7; border-bottom: 1px solid #aaa; }
.prompt { display: flex; align-items: center; gap: 4px; height: 12px; padding-left: 1px; }
.prompt b { font-family: "Liberation Mono", monospace; color: #222; }
.prompt label { margin-left: -3px; }
.prompt input { flex: 1; }
.options { display: flex; gap: 3px; }
.options button { background: #d9d9de; color: #222; }
.options button:first-of-type { margin-left: -3px; }
.options button:last-of-type { margin-right: -2px; }
.options i { font-style: normal; color: #3a3ab4; }

/* status bar */
.statusbar { display: flex; justify-content: space-between; height: 17px; padding-right: 147px; background: #393939; border-top: 1px solid #888; }
.layouts { display: flex; gap: 2px; height: 11px; padding-left: 6px; color: #999; }
.layouts button { width: 29px; background: #555; border-radius: 0 0 6px 6px; }
.layouts .active { width: 26px; background: #808080; color: #fff; font-weight: bold; }
.layouts .plus { width: 14px; color: #ccc; font-size: 10px; }
.status-tools { display: flex; align-items: center; background: #454545; border-left: 1px solid #666; }
.status-tools button { width: 12px; height: 14px; }
.status-tools svg { width: 12px; height: 12px; }
.status-tools .model-btn { width: 17px; font-weight: bold; color: #f0f0f0; }
.status-tools .split { border-left: 1px solid #666; }

/* desktop taskbar */
.taskbar { display: flex; height: 4px; background: linear-gradient(90deg, #1f5d90 60%, #4a7fb0 70%, #1d5791 78%); }
.start { width: 69px; background: radial-gradient(ellipse at 18px 4px, #9bd0ea 7px, transparent 9px), radial-gradient(ellipse at 50px 4px, #a5d3e8 6px, transparent 8px), #1d6c9c; }
.task { width: 91px; background: linear-gradient(90deg, #a5d0d1, #4b9dad); border: 1px solid #2f5c6d; border-bottom: 0; }
.light { background: linear-gradient(90deg, #e8f2f2, #6ea9b9); }
.red { background: radial-gradient(circle at 15px 4px, #d0403a 4px, transparent 5px), linear-gradient(90deg, #cadfdf, #6596b7); }
.dark { background: radial-gradient(circle at 13px 4px, #222 4px, transparent 5px), linear-gradient(90deg, #9db9bd, #4e8fa4); }

/* overlaid marks */
.watermarks { position: absolute; right: 0; bottom: 0; width: 250px; height: 90px; pointer-events: none; }
.marks { position: absolute; inset: 0; }
.kuzhi { position: absolute; left: 126px; top: 18px; color: #444; font: 500 25px/26px "Noto Sans CJK SC", sans-serif; }
.site-badge { position: absolute; right: 0; bottom: 0; display: flex; gap: 1px; width: 150px; height: 50px; padding: 3px 0 0 1px; background: #fff; }
.site-text { display: flex; flex-direction: column; padding-top: 11px; white-space: nowrap; color: #2395c7; }
.site-text strong { font: 700 15px/16px "Noto Sans CJK SC", sans-serif; }
.site-text a { color: #187aa8; text-decoration: none; padding-left: 3px; font: bold 8px/12px "Liberation Serif", serif; }
```
